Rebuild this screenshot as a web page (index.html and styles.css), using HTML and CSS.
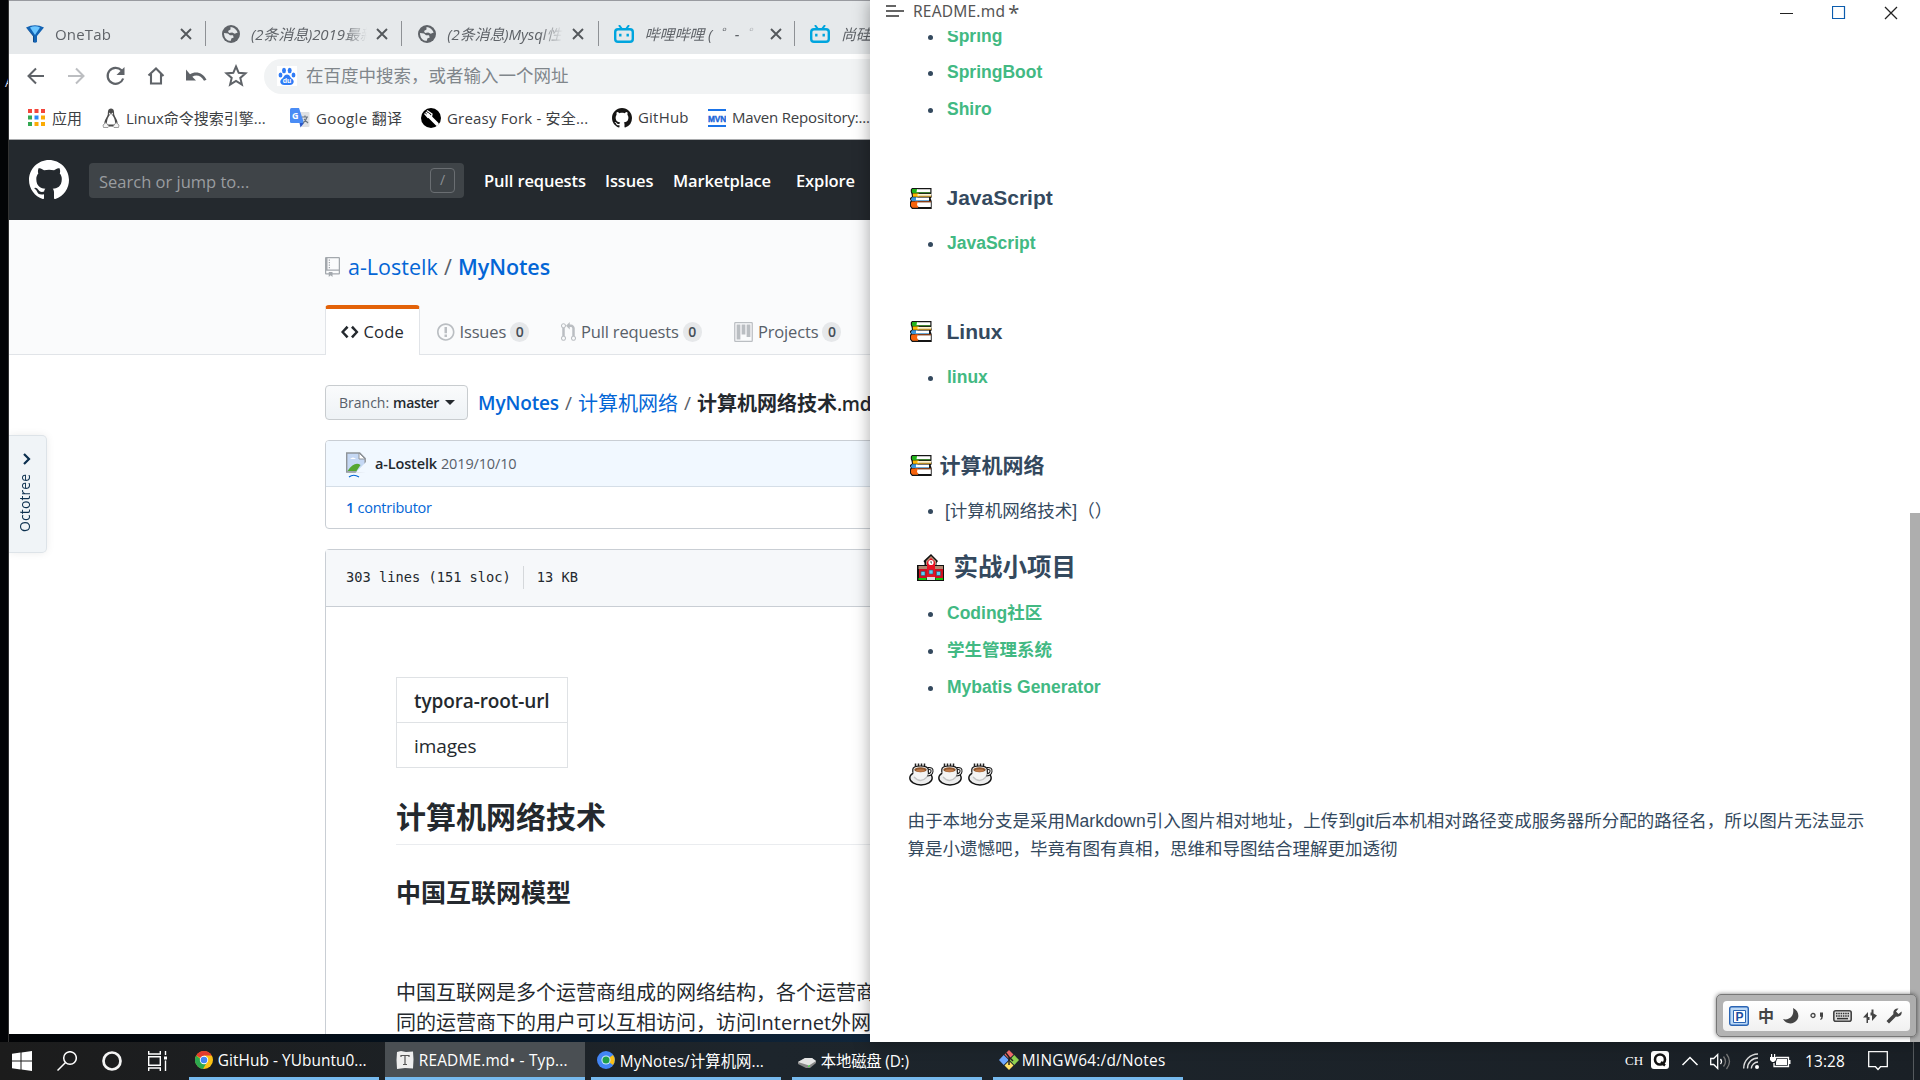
FILE: index.html
```html
<!DOCTYPE html>
<html lang="zh-CN">
<head>
<meta charset="utf-8">
<title>Desktop</title>
<link rel="stylesheet" href="styles.css">
</head>
<body>
<svg class="defs" width="0" height="0">
  <symbol id="x" viewBox="0 0 12 12"><path d="M1 1l10 10M11 1L1 11" fill="none" stroke="#54585c" stroke-width="1.9"/></symbol>
  <symbol id="globe" viewBox="0 0 18 18"><circle cx="9" cy="9" r="9" fill="#5f6368"/><path d="M2 8l4 .6 2 1.600h3l.7 2.200-2.400 1.200-.4 2.200C4.500 16 2 12.500 2 8zM8.500 2c3.500.2 6 2.500 7.200 5.500l-3 1.300-2.500-1.300L7 8 6 6l2.500-1.500z" fill="#e6e9eb"/></symbol>
  <symbol id="bili" viewBox="0 0 20 18"><path d="M5.500.8L8 4M14.500.8L12 4" stroke="#00a5de" stroke-width="2" stroke-linecap="round"/><rect x="1.200" y="4.200" width="17.600" height="12.600" rx="2.800" fill="none" stroke="#00a5de" stroke-width="2.400"/><path d="M6.300 8.700v2.800M13.700 8.700v2.800" stroke="#00a5de" stroke-width="2.400"/></symbol>
  <symbol id="octocat" viewBox="0 0 16 16"><path fill-rule="evenodd" d="M8 0C3.580 0 0 3.580 0 8c0 3.540 2.290 6.530 5.470 7.590.4.070.55-.17.55-.38 0-.19-.01-.82-.01-1.490-2.010.37-2.530-.49-2.690-.94-.09-.23-.48-.94-.82-1.130-.28-.15-.68-.52-.01-.53.63-.01 1.080.58 1.230.82.72 1.210 1.870.87 2.330.66.070-.52.28-.87.51-1.070-1.780-.2-3.640-.89-3.640-3.950 0-.87.31-1.590.82-2.150-.08-.2-.36-1.020.08-2.120 0 0 .67-.21 2.200.82.64-.18 1.320-.27 2-.27s1.360.09 2 .27c1.530-1.040 2.200-.82 2.200-.82.44 1.100.16 1.920.08 2.120.51.56.82 1.270.82 2.150 0 3.070-1.870 3.750-3.650 3.950.29.25.54.73.54 1.480 0 1.070-.01 1.930-.01 2.200 0 .21.15.46.55.38A8.010 8.010 0 0 0 16 8c0-4.420-3.580-8-8-8z"/></symbol>
  <symbol id="books" viewBox="0 0 22 21"><path d="M2 0h19.500v5.500l-.5 1h.7v2.800l-1 1 1 3v7.700H2L0 18.500V14l.8-1.500L0 11.500V10l2-1.500-.5-2.500L.8 4V1.500z" fill="#151515"/><path d="M2.200 1h6v4.200H2.800L1.800 4z" fill="#22b31a"/><path d="M7 1.200h13.300v3H6.500z" fill="#fff"/><path d="M6 4.200h14.300v1H6z" fill="#3d8f2b"/><path d="M2.800 5.500h6v3.300H3z" fill="#ffb900"/><path d="M7.500 6h13.800v1.900H7.500z" fill="#fff3cf"/><path d="M7.500 7.900h13.800v.9H7.500z" fill="#e0a92c"/><path d="M2 9.200h5.500V13H2L.8 11.500z" fill="#3a96dd"/><path d="M6 9.600h13v2.400H6z" fill="#fff"/><path d="M6 12h13v1H6z" fill="#6aa9d8"/><path d="M2 13.500h6v6.200H2.500L1 18v-3.500z" fill="#f7630c"/><path d="M7.500 14.200h13.300v4.800H8.500L7 17z" fill="#fff"/><path d="M5 13.400h16v.8H5z" fill="#d35b1d"/></symbol>
  <symbol id="cup" viewBox="0 0 25 23"><ellipse cx="12" cy="15" rx="11.200" ry="7" fill="#ededed" stroke="#111" stroke-width="1.400"/><path d="M6.500.500v3M9.500.500v3M12.500.500v3M15.500.500v3" stroke="#222" stroke-width="1.500"/><path d="M19 5.500q4.500-.5 4 3t-5.500 3.500" fill="none" stroke="#111" stroke-width="3"/><path d="M19 5.500q4.500-.5 4 3t-5.500 3.500" fill="none" stroke="#eee" stroke-width="1.100"/><path d="M4 6.500c0-2 3-3.200 7.500-3.200S19.300 4.500 19.300 6.500c0 6-3 10.500-7.800 10.500S4 12.500 4 6.500z" fill="#f4f4f4"/><path d="M3.800 9.500V6.500c0-2 3-3.500 7.700-3.500s7.800 1.500 7.800 3.500v3" fill="none" stroke="#111" stroke-width="1.200"/><ellipse cx="11.500" cy="6.700" rx="6.200" ry="2.500" fill="#8e562e"/><ellipse cx="11.500" cy="7.500" rx="4.300" ry="1.300" fill="#c27c4b"/><path d="M5 14q6.500 7 13 0" fill="none" stroke="#c4c4c4" stroke-width="1.300"/></symbol>
</svg>

<div class="workspace">
  <div class="gutter"><span class="peek">A</span></div>

  <section class="browser">
    <div class="tabs">
      <div class="tab"><svg class="fav" viewBox="0 0 18 18"><path d="M0 2.500Q9-2 18 2.500L11 11v6q-2 1.500-4 0v-6z" fill="#1464b4"/><path d="M4 2.500q5-2.500 10 0L9 10z" fill="#6cc6ff"/><path d="M0 2.500L7.500 11v6.300L7 17v-6z" fill="#0a2e5c"/></svg><span class="tab-t up"><i>OneTab</i></span><svg class="cl"><use href="#x"/></svg></div>
      <div class="tab"><svg class="fav"><use href="#globe"/></svg><span class="tab-t"><i>(2条消息)2019最新</i></span><svg class="cl"><use href="#x"/></svg></div>
      <div class="tab"><svg class="fav"><use href="#globe"/></svg><span class="tab-t"><i>(2条消息)Mysql性</i></span><svg class="cl"><use href="#x"/></svg></div>
      <div class="tab"><svg class="fav b"><use href="#bili"/></svg><span class="tab-t"><i>哔哩哔哩 (&nbsp; ゜- &nbsp;゜)つ</i></span><svg class="cl"><use href="#x"/></svg></div>
      <div class="tab"><svg class="fav b"><use href="#bili"/></svg><span class="tab-t"><i>尚硅谷</i></span></div>
    </div>

    <div class="toolbar">
      <svg class="tb" viewBox="0 0 24 24"><path d="M20 12H5M12 4.500L4.500 12l7.500 7.500" fill="none" stroke="#5f6368" stroke-width="2"/></svg>
      <svg class="tb" viewBox="0 0 24 24"><path d="M4 12h15M12 4.500l7.500 7.500-7.500 7.500" fill="none" stroke="#bcbec1" stroke-width="2"/></svg>
      <svg class="tb" viewBox="0 0 24 24"><path d="M19.200 14.500A8 8 0 1 1 17.500 6.300L19 8" fill="none" stroke="#5f6368" stroke-width="2.200"/><path d="M20.500 3v8h-8z" fill="#5f6368"/></svg>
      <svg class="tb" viewBox="0 0 24 24"><path d="M4.500 11.500L12 4.500l7.500 7.500M7 10v9.500h10V10" fill="none" stroke="#5f6368" stroke-width="2.100"/></svg>
      <svg class="tb" viewBox="0 0 24 24"><path d="M2 5.500v11h10L8.300 12.800c4-2.700 9-1 11.700 4l2.500-1C19.500 9 12 6.500 6 10.200z" fill="#5f6368"/></svg>
      <svg class="tb" viewBox="0 0 24 24"><path d="M12 2.500l2.700 6.300 6.800.6-5.200 4.500 1.600 6.700-5.900-3.600-5.900 3.600 1.600-6.700-5.200-4.500 6.800-.6z" fill="none" stroke="#5f6368" stroke-width="2"/></svg>
      <div class="omni">
        <svg class="baidu" viewBox="0 0 20 20"><path fill="#fff" d="M0 0h20v20H0z"/><g fill="#2f7cf6"><ellipse cx="7" cy="4.500" rx="2" ry="2.700"/><ellipse cx="12.700" cy="4.500" rx="2" ry="2.700"/><ellipse cx="3.500" cy="9" rx="1.900" ry="2.500"/><ellipse cx="16.500" cy="9" rx="1.900" ry="2.500"/><path d="M10 8.500c3 0 3 3 5.300 4.500 3 2.500.7 6-2.300 6H7c-3 0-5.300-3.500-2.300-6C7 11.500 7 8.500 10 8.500z"/></g><text x="10" y="17" font-family="Liberation Sans" font-size="7" font-weight="bold" fill="#fff" text-anchor="middle">du</text></svg>
        <span>在百度中搜索，或者输入一个网址</span>
      </div>
    </div>

    <div class="bookmarks">
      <div class="bm bm-apps"><svg viewBox="0 0 18 18"><g fill="#f4453a"><path d="M0 0h4v4H0zM6.500 0h4v4h-4zM13 0h4v4h-4z"/></g><path fill="#34a853" d="M0 6.500h4v4H0zM0 13h4v4H0z"/><path fill="#2b8af7" d="M6.500 6.500h4v4h-4z"/><path fill="#fbab05" d="M13 6.500h4v4h-4zM6.500 13h4v4h-4zM13 13h4v4h-4z"/></svg><i>应用</i></div>
      <div class="bm bm-linux"><svg viewBox="0 0 18 20"><path d="M9 .5c-3.500 0-3 4-3.200 6C5 9.500 2 12 2.500 16l3 2.500h7l3-2.500c.5-4-2.500-6.500-3.300-9.500-.2-2 .3-6-3.200-6z" fill="#4c4c4c"/><path d="M9 6c-2.500 2-4.500 6-4 10.500h8C13.500 12 11.500 8 9 6z" fill="#fff"/><path d="M7 4.500l2 1.500 2-1.500v2H7z" fill="#eee"/><path d="M1 17l3-2.500 3 4-1 1H1.500zM17 17l-3-2.500-3 4 1 1h4.500z" fill="#f5f5f5" stroke="#888" stroke-width=".8"/></svg><i>Linux命令搜索引擎...</i></div>
      <div class="bm bm-gt"><svg class="w20" viewBox="0 0 20 20"><path fill="#dfe1e4" d="M8 4h10.500q1 0 1 1v13q0 1-1 1H12z"/><path fill="#4a8cf5" d="M1.500 0H9l5 15H1.500Q0 15 0 14V1.500Q0 0 1.500 0z"/><path fill="#2a56c6" d="M9.500 15H14l-3.500 4.500z"/><text x="2" y="11" font-size="9" font-weight="bold" font-family="Open Sans" fill="#fff">G</text><path d="M12 9h6M15 7.500V9M17 9q-1 4-4 6M14 11l4 4" stroke="#6b7683" fill="none" stroke-width="1.200"/></svg><i>Google 翻译</i></div>
      <div class="bm bm-gf"><svg class="w20" viewBox="0 0 20 20"><circle cx="10" cy="10" r="10" fill="#000"/><path d="M7 7l9 9" stroke="#fff" stroke-width="3.600" stroke-linecap="round"/><path d="M3.500 5.500l3.500 4 3.500-1L11 6 6 2.500M4.800 4l4 3.500" stroke="#fff" stroke-width="1.300" fill="none"/></svg><i>Greasy Fork - 安全...</i></div>
      <div class="bm bm-gh"><svg class="w20" fill="#161514"><use href="#octocat"/></svg><i>GitHub</i></div>
      <div class="bm bm-mvn"><svg viewBox="0 0 18 18"><path d="M0 1h18M0 17h18" stroke="#1a73e8" stroke-width="2"/><text x="9" y="12.700" font-family="Liberation Sans" font-size="9.500" font-weight="bold" fill="#1a63d8" stroke="#1a63d8" stroke-width=".4" text-anchor="middle" textLength="18" lengthAdjust="spacingAndGlyphs">MVN</text></svg><i>Maven Repository:...</i></div>
    </div>

    <header class="gh-head">
      <svg class="mark" fill="#fff"><use href="#octocat"/></svg>
      <div class="gh-search"><i>Search or jump to...</i><b>/</b></div>
      <nav><a class="n1">Pull requests</a><a class="n2">Issues</a><a class="n3">Marketplace</a><a class="n4">Explore</a></nav>
    </header>

    <div class="repo-head">
      <h1><svg viewBox="0 0 12 16" fill="#a3a8ad"><path d="M4 9H3V8h1v1zm0-3H3v1h1V6zm0-2H3v1h1V4zm0-2H3v1h1V2zm8-1v12c0 .55-.45 1-1 1H6v2l-1.500-1.500L3 16v-2H1c-.55 0-1-.45-1-1V1c0-.55.45-1 1-1h10c.55 0 1 .45 1 1zm-1 10H1v2h2v-1h3v1h5v-2zm0-10H2v9h9V1z"/></svg><i class="own">a-Lostelk</i><em>/</em><i class="rep">MyNotes</i></h1>
      <div class="repo-tabs">
        <div class="rt on"><svg viewBox="0 0 14 16"><path d="M9.500 3L8 4.500 11.500 8 8 11.500 9.500 13 14 8 9.500 3zm-5 0L0 8l4.500 5L6 11.500 2.500 8 6 4.500 4.500 3z"/></svg><i>Code</i></div>
        <div class="rt rt-i"><svg viewBox="0 0 14 16"><path d="M7 2.300c3.140 0 5.700 2.560 5.700 5.700s-2.560 5.700-5.700 5.700A5.710 5.710 0 0 1 1.300 8c0-3.140 2.560-5.700 5.700-5.700zM7 1C3.140 1 0 4.140 0 8s3.140 7 7 7 7-3.140 7-7-3.140-7-7-7zm1 3H6v5h2V4zm0 6H6v2h2v-2z"/></svg><i>Issues</i><b>0</b></div>
        <div class="rt rt-p"><svg class="s12" viewBox="0 0 12 16"><path d="M11 11.280V5c-.03-.78-.34-1.470-.94-2.060C9.460 2.350 8.780 2.030 8 2H7V0L4 3l3 3V4h1c.27.020.48.110.69.310.21.200.3.420.31.690v6.280A1.993 1.993 0 0 0 10 15a1.993 1.993 0 0 0 1-3.720zm-1 2.920c-.66 0-1.200-.55-1.200-1.200 0-.65.55-1.200 1.200-1.200.65 0 1.200.55 1.200 1.200 0 .65-.55 1.200-1.200 1.200zM4 3c0-1.110-.89-2-2-2a1.993 1.993 0 0 0-1 3.720v6.560A1.993 1.993 0 0 0 2 15a1.993 1.993 0 0 0 1-3.720V4.720c.59-.34 1-.98 1-1.720zm-.8 10c0 .66-.55 1.200-1.200 1.200-.65 0-1.200-.55-1.200-1.200 0-.65.55-1.200 1.200-1.200.65 0 1.200.55 1.200 1.200zM2 4.200C1.340 4.200.8 3.650.8 3c0-.65.55-1.200 1.200-1.200.65 0 1.200.55 1.200 1.200 0 .65-.55 1.200-1.200 1.200z"/></svg><i>Pull requests</i><b>0</b></div>
        <div class="rt rt-j"><svg class="s15" viewBox="0 0 15 16"><path fill-rule="evenodd" d="M10 12h3V2h-3v10zm-4-2h3V2H6v8zm-4 4h3V2H2v12zm-1 1h13V1H1v14zM14 0H1a1 1 0 0 0-1 1v14a1 1 0 0 0 1 1h13a1 1 0 0 0 1-1V1a1 1 0 0 0-1-1z"/></svg><i>Projects</i><b>0</b></div>
      </div>
    </div>

    <div class="octotree"><svg viewBox="0 0 8 12"><path d="M1 1l5 5-5 5" fill="none" stroke="#0b2f4e" stroke-width="2.200"/></svg><span>Octotree</span></div>

    <main class="repo">
      <div class="crumbs">
        <div class="branch"><i class="br">Branch:</i><i class="ma">master</i><u></u></div>
        <i class="c1">MyNotes</i><em>/</em><i class="c2">计算机网络</i><em>/</em><i class="c3">计算机网络技术<span>.md</span></i>
      </div>
      <div class="commit">
        <div class="commit-top"><svg viewBox="0 0 20 26"><path d="M.7 1h13l5.500 5.500V20H.7z" fill="#c5d8f4" stroke="#8f9499" stroke-width="1.400"/><path d="M13 1v6h6z" fill="#fff" stroke="#8f9499"/><path d="M1.500 19q7-10 13-6l-4 6z" fill="#55a630"/><path d="M9.500 20.800L20 10v11z" fill="#f1f8ff"/><path d="M4 7q3-3 6 0z" fill="#fff"/><path d="M3 25q4.500-3.500 10 0" fill="none" stroke="#0366d6" stroke-width="1.200"/></svg><i class="auth">a-Lostelk</i><i class="date">2019/10/10</i></div>
        <div class="commit-bot"><i><b>1</b> contributor</i></div>
      </div>
      <div class="file">
        <div class="file-top"><span>303 lines (151 sloc)</span><span class="kb">13 KB</span></div>
        <div class="md">
          <div class="tbl"><div class="th">typora-root-url</div><div>images</div></div>
          <h2>计算机网络技术</h2>
          <h3>中国互联网模型</h3>
          <p>中国互联网是多个运营商组成的网络结构，各个运营商<br>同的运营商下的用户可以互相访问，访问Internet外网，</p>
        </div>
      </div>
    </main>
  </section>

  <section class="typora">
    <div class="t-bar">
      <svg class="burger" viewBox="0 0 18 12"><path d="M0 1h10M0 6h18M0 11h13" stroke="#333" stroke-width="1.300"/></svg>
      <i>README.md</i><em>*</em>
      <div class="ctl"><svg viewBox="0 0 14 14"><path d="M0 7.500h13" stroke="#222"/></svg><svg viewBox="0 0 14 14"><path d="M.5.500h12v12H.500z" fill="none" stroke="#0b5cad" stroke-width="1.200"/></svg><svg viewBox="0 0 14 14"><path d="M1 1l12 12M13 1L1 13" stroke="#222" stroke-width="1.300"/></svg></div>
    </div>
    <div class="t-main">
      <article>
        <ul class="first"><li><a>Spring</a></li><li><a>SpringBoot</a></li><li><a>Shiro</a></li></ul>
        <h3><svg><use href="#books"/></svg><span class="lat">JavaScript</span></h3>
        <ul><li><a>JavaScript</a></li></ul>
        <h3><svg><use href="#books"/></svg><span class="lat">Linux</span></h3>
        <ul><li><a>linux</a></li></ul>
        <h3><svg><use href="#books"/></svg><span>计算机网络</span></h3>
        <ul><li class="plain">[计算机网络技术]（）</li></ul>
        <h2><svg viewBox="0 0 28 28"><path d="M14 0l7 7-1.500 2V11H27v16H0V11h7.500V9L6.500 7z" fill="#111"/><path d="M14 2l5 5v4H9V7z" fill="#b98a72"/><path d="M10 8l4-4 4 4v17h-8z" fill="#e81224"/><path d="M1.500 12H10v3H1.500zM18 12h8v3h-8z" fill="#b08972"/><path d="M2 15h8v9H2zM18 15h8v9h-8z" fill="#d01020"/><circle cx="14" cy="8.500" r="2.600" fill="#fff"/><path d="M14 7v2h1" stroke="#333" fill="none" stroke-width=".8"/><path d="M4 17.500h4v4H4zM19.500 17.500h4v4h-4zM12 16h4v4h-4z" fill="#5ad1f5" stroke="#35566a" stroke-width=".6"/><path d="M1.500 24h8v2h-8zM18.500 24h7.500v2h-7.500z" fill="#16c60c"/><path d="M10 23h8v3h-8z" fill="#ddd"/></svg><span>实战小项目</span></h2>
        <ul><li><a>Coding社区</a></li><li><a>学生管理系统</a></li><li><a>Mybatis Generator</a></li></ul>
        <div class="cups"><svg><use href="#cup"/></svg><svg><use href="#cup"/></svg><svg><use href="#cup"/></svg></div>
        <p>由于本地分支是采用Markdown引入图片相对地址，上传到git后本机相对路径变成服务器所分配的路径名，所以图片无法显示<br>算是小遗憾吧，毕竟有图有真相，思维和导图结合理解更加透彻</p>
      </article>
      <div class="scroll"></div>
    </div>
  </section>
</div>

<footer class="taskbar">
  <svg class="sys" viewBox="0 0 20 20"><path fill="#fff" d="M0 2.800l8.500-1.200v8H0zM9.500 1.400L20 0v9.600H9.500zM0 10.500h8.500v8L0 17.300zM9.500 10.500H20V20L9.500 18.600z"/></svg>
  <svg class="sys" viewBox="0 0 20 20"><circle cx="13" cy="7" r="6.300" fill="none" stroke="#fff" stroke-width="1.500"/><path d="M8.500 11.500L.5 19.500" stroke="#fff" stroke-width="1.500"/></svg>
  <svg class="sys" viewBox="0 0 20 20"><circle cx="10" cy="10" r="8.500" fill="none" stroke="#f4f4f4" stroke-width="2.700"/></svg>
  <svg class="sys" viewBox="0 0 20 20"><path d="M.7 0v3h11.600V0M.7 20v-3h11.600v3M.7 5.800h11.600v8.400H.7zM17.500 0v4M17.500 9.500V20" fill="none" stroke="#fff" stroke-width="1.400"/><path d="M16 5.500h3v3h-3z" fill="#fff"/></svg>
  <div class="app"><svg viewBox="0 0 18 18"><circle cx="9" cy="9" r="9" fill="#fbc116"/><path d="M9 9L1.200 4.500A9 9 0 0 1 16.800 4.500H9z" fill="#e33b2e"/><path d="M1.200 4.500A9 9 0 0 0 8 18l4-7H9z" fill="#2da94f"/><circle cx="9" cy="9" r="4.200" fill="#fff"/><circle cx="9" cy="9" r="3.300" fill="#4285f4"/></svg><i>GitHub - YUbuntu0...</i></div>
  <div class="app active"><svg viewBox="0 0 18 18"><path d="M1 1l4-1 5 1 7-.5.500 8-.5 9L9 17l-8 1L.5 9z" fill="#eee"/><path d="M5 6V4.500h8V6M9 4.500v9M7 13.500h4" stroke="#555" stroke-width="1.200" fill="none"/></svg><i>README.md• - Typ...</i></div>
  <div class="app"><svg viewBox="0 0 18 18"><circle cx="9" cy="9" r="9" fill="#4285f4"/><path d="M9 9l7-5a9 9 0 0 1 0 10z" fill="#fbc116"/><circle cx="9" cy="9" r="4.600" fill="#c8e6ff"/><circle cx="9" cy="9" r="3.500" fill="#1fa04b"/></svg><i>MyNotes/计算机网...</i></div>
  <div class="app disk"><svg viewBox="0 0 18 18"><path d="M0 11l7-4h7l4 3v2l-6 5H8l-8-4z" fill="#888"/><path d="M0 11l7-4h7l4 3-7 4.500z" fill="#e4e4e4"/><path d="M10 15.500l2-.8" stroke="#3f3" stroke-width="1"/></svg><i>本地磁盘 (D:)</i></div>
  <div class="app"><svg class="git" viewBox="0 0 20 20"><path d="M10 0l4.500 4.500L10 9 5.500 4.500z" fill="#f26d6d"/><path d="M4.700 5L9.700 10l-5 5L0 10z" fill="#6fa8ff"/><path d="M15.300 5L20 10l-4.700 5-4.800-5z" fill="#8fd14f"/><path d="M10 11l4.500 4.500L10 20l-4.500-4.500z" fill="#ffe066"/><path d="M7 3l3 4v8M10 7l4 4" stroke="#222" stroke-width="1.500" fill="none"/></svg><i>MINGW64:/d/Notes</i></div>
  <div class="tray">
    <span class="ch">CH</span>
    <svg class="q" viewBox="0 0 18 18"><rect width="18" height="18" rx="3" fill="#fff"/><circle cx="9" cy="8.500" r="5" fill="none" stroke="#111" stroke-width="2.600"/><path d="M10 11l4 3.500" stroke="#111" stroke-width="2.400"/></svg>
    <svg class="up-ic" viewBox="0 0 18 10"><path d="M1.500 9L9 1.500 16.500 9" fill="none" stroke="#fff" stroke-width="1.500"/></svg>
    <svg class="spk" viewBox="0 0 21 17"><path d="M.7 5.500h3l4-4v14l-4-4h-3z" fill="none" stroke="#fff" stroke-width="1.300"/><path d="M10.500 6q2 2.500 0 5" fill="none" stroke="#fff" stroke-width="1.300"/><path d="M13.500 3.500q4 5 0 10M16.500 1q6 7.500 0 15" fill="none" stroke="#777" stroke-width="1.300"/></svg>
    <svg class="wifi" viewBox="0 0 17 16"><path d="M.7 15.500A14.500 14.500 0 0 1 15 1M4.500 15.500A10.500 10.500 0 0 1 15 5M8.300 15.500A7 7 0 0 1 15 9" fill="none" stroke="#ddd" stroke-width="1.400"/><circle cx="14" cy="14" r="2" fill="#fff"/></svg>
    <svg class="bat" viewBox="0 0 21 14"><path d="M6 3.500h12.500v9H4V9" fill="none" stroke="#fff" stroke-width="1.300"/><path d="M7 5h10v6H6V8z" fill="#fff"/><path d="M19 6h1.500v4H19zM0 3h6v3L4 8H2L0 6zM1 0h1.200v3H1zM4 0h1.200v3H4z" fill="#fff"/></svg>
    <span class="time">13:28</span>
    <svg class="note" viewBox="0 0 20 20"><path d="M.7.700h18.600v15H12.500L10 18.500 7.500 15.700H.7z" fill="none" stroke="#fff" stroke-width="1.300"/></svg>
    <span class="peek-desk"></span>
  </div>
</footer>

<div class="ime"><div>
  <svg class="p" viewBox="0 0 20 20"><rect x=".7" y=".7" width="18.600" height="18.600" rx="2" fill="#bcd9f7" stroke="#2a64b4" stroke-width="1.400"/><path d="M4.500 4.500h12v12h-12z" fill="#fff" stroke="#2a64b4"/><text x="10.500" y="15" font-family="Liberation Sans" font-weight="bold" font-size="12" fill="#1c4ea0" text-anchor="middle">P</text></svg>
  <span>中</span>
  <svg class="moon" viewBox="0 0 16 16"><path d="M10 0c7 3 7 12 1 14.500C7 16.500 2 15 0 11c4 1.500 12-1 10-11z" fill="#444"/></svg>
  <svg class="pt" viewBox="0 0 14 10"><circle cx="3" cy="4.500" r="2" fill="none" stroke="#444" stroke-width="1.300"/><path d="M10 1.500h3v3.500q0 3-2.500 4l-.3-1q1.300-1 1-2.300H10z" fill="#444"/></svg>
  <svg class="kb-ic" viewBox="0 0 19 12"><rect x=".8" y=".8" width="17.400" height="10.400" rx="2" fill="#ddd" stroke="#444" stroke-width="1.600"/><path d="M3 3.500h13M3 6h13" stroke="#333" stroke-width="1.400" stroke-dasharray="1.500 .8"/><path d="M4 8.600h11" stroke="#333" stroke-width="1.500"/></svg>
  <svg class="sw" viewBox="0 0 14 16"><path d="M0 9.500L5 4v5h1.500v3H5v3H3.500v-5.500zM14 7.500L9 13V7.500H7.500v-3H8.500V1.500h2v4z" fill="#444"/></svg>
  <svg class="wr" viewBox="0 0 16 16"><path d="M15.500 3.500L12.500 6 10 3.500 12.500.5C9 0 6.500 3 7.500 6L.5 13 3 15.500l7-7c3.500 1 6.500-1.500 5.500-5z" fill="#444"/></svg>
</div></div>
</body>
</html>
```
FILE: styles.css
```css
* { box-sizing: border-box; }
body { margin: 0; width: 1920px; height: 1080px; overflow: hidden; background: #04060a; font-family: "Open Sans", "Noto Sans CJK SC", sans-serif; display: flex; flex-direction: column; position: relative; }
i, em, u { font-style: normal; text-decoration: none; white-space: nowrap; }
h1, h2, h3, p, ul { margin: 0; padding: 0; }
svg { flex: none; display: block; }
.defs { position: absolute; }
.workspace { height: 1042px; display: flex; background: linear-gradient(90deg, #020305 0, #04101c 400px, #10263c 870px); }
.gutter { width: 9px; background: #030406; border-right: 1px solid #333; overflow: hidden; padding: 70px 0 0 5px; }
.peek { color: #dde; font-size: 13px; }

/* browser window */
.browser { width: 861px; height: 1034px; background: #fff; overflow: hidden; position: relative; }
.tabs { height: 54px; background: #e6e9eb; border-top: 1px solid #999ba0; display: flex; padding-top: 20px; }
.tab { width: 196.300px; height: 25px; flex: none; display: flex; align-items: center; padding-left: 16px; border-right: 1px solid #8e9195; color: #5f6368; font-size: 15px; }
.tab:first-child { width: 197px; padding-left: 17px; }
.tab:last-child { border: 0; }
.fav { width: 18px; height: 18px; margin-right: 11px; }
.fav.b { width: 20px; margin: 0 11px 0 -1px; }
.tab-t { width: 116px; margin-right: 9px; overflow: hidden; white-space: nowrap; -webkit-mask-image: linear-gradient(90deg, #000 80%, transparent); mask-image: linear-gradient(90deg, #000 80%, transparent); }
.tab-t i { font-style: italic; letter-spacing: -.1px; }
.tab-t.up i { font-style: normal; letter-spacing: .15px; }
.cl { width: 12px; height: 12px; }
.toolbar { height: 44px; display: flex; align-items: center; padding-left: 15px; }
.tb { width: 24px; height: 24px; margin-right: 16px; }
.omni { flex: 1; height: 35px; border-radius: 18px 0 0 18px; background: #f1f3f4; display: flex; align-items: center; gap: 9px; padding-left: 13px; font-size: 17.500px; line-height: 33px; color: #80868b; white-space: nowrap; }
.omni span { padding-bottom: 2px; }
.baidu { width: 20px; height: 20px; }
.bookmarks { height: 42px; border-bottom: 1px solid #a9abad; display: flex; padding-left: 19px; font-size: 15px; color: #3c4043; }
.bm { flex: none; display: flex; align-items: center; gap: 6px; height: 39px; }
.bm i { padding-bottom: 1px; }
.bm svg { width: 18px; height: 20px; }
.bm svg.w20 { width: 20px; }
.bm-apps { width: 74px; }
.bm-linux { width: 188px; }
.bm-gt { width: 131px; letter-spacing: .35px; }
.bm-gf { width: 191px; letter-spacing: .2px; }
.bm-gh { width: 96px; letter-spacing: .2px; }
.bm-mvn { letter-spacing: -.18px; }

.gh-head { height: 80px; background: #24292e; display: flex; align-items: center; padding-left: 20px; }
.mark { width: 40px; height: 40px; }
.gh-search { width: 375px; height: 35px; margin: 1px 20px 0 20px; background: #3f4448; border-radius: 4px; display: flex; align-items: center; justify-content: space-between; padding: 0 9px 0 10px; color: #9a9da0; font-size: 16.500px; }
.gh-search i { padding-top: 1px; }
.gh-search b { width: 25px; height: 25px; border: 1px solid #6a6e72; border-radius: 4px; font: 14px/22px "Open Sans", sans-serif; text-align: center; color: #8b8f93; }
nav { display: flex; color: #fff; font-weight: 600; font-size: 16.500px; letter-spacing: -.14px; white-space: nowrap; }
.n1 { width: 121px; }
.n2 { width: 68px; }
.n3 { width: 123px; }
.repo-head { height: 135px; background: #fafbfc; border-bottom: 1px solid #e1e4e8; padding: 31px 0 0 316px; }
.repo-head h1 { height: 32px; display: flex; align-items: center; font-size: 21.500px; font-weight: 400; line-height: 32px; }
.repo-head h1 svg { width: 15px; height: 20px; margin-right: 8px; }
.repo-head h1 em { width: 20px; text-align: center; color: #586069; }
.own, .rep { color: #0366d6; }
.own { width: 90px; }
.rep { font-weight: 600; letter-spacing: -.09px; }
.repo-tabs { display: flex; margin-top: 22px; height: 50px; }
.rt { display: flex; align-items: center; height: 50px; font-size: 16.500px; color: #586069; padding-top: 3px; letter-spacing: -.16px; }
.rt i { padding-bottom: 1px; }
.rt svg { width: 17.500px; height: 20px; fill: #babec2; margin-right: 5px; }
.rt svg.s12 { width: 15px; }
.rt svg.s15 { width: 19px; margin-left: 1px; }
.rt b { width: 19px; height: 20px; border-radius: 10px; background: #e6e8ea; font: 600 14px/20px "Open Sans", sans-serif; text-align: center; color: #444d56; margin-left: 4px; }
.rt.on { width: 95px; background: #fff; border: 1px solid #e1e4e8; border-top: 4px solid #e36209; border-bottom: 0; border-radius: 4px 4px 0 0; padding: 0 0 0 15px; color: #24292e; letter-spacing: .2px; }
.rt.on svg { fill: #24292e; }
.rt-i { width: 124px; margin-left: 17px; }
.rt-p { width: 172px; }

.octotree { position: absolute; left: 0; top: 435px; width: 38px; height: 118px; background: #f0f4f7; border: 1px solid #dde3e8; border-left: 0; border-radius: 0 5px 5px 0; box-shadow: 0 0 8px rgba(0,0,0,.08); color: #0b2f4e; }
.octotree svg { width: 8px; height: 12px; margin: 17px 0 0 14px; }
.octotree span { display: block; writing-mode: vertical-rl; transform: rotate(180deg); font-size: 14px; line-height: 20px; margin: 7px 0 0 6px; height: 60px; letter-spacing: .1px; }

.repo { padding: 30px 0 0 316px; width: 900px; }
.crumbs { height: 35px; display: flex; align-items: center; font-size: 19px; color: #586069; }
.branch { width: 143px; height: 35px; border: 1px solid #c8cccf; border-radius: 4px; background: linear-gradient(#fafbfc, #eff3f6 90%); display: flex; align-items: center; padding-left: 13px; font-size: 14px; margin-right: 10px; }
.ma { font-weight: 600; color: #24292e; margin-left: 4px; letter-spacing: -.33px; }
.branch u { border: 5px solid transparent; border-top-color: #24292e; border-bottom: 0; margin-left: 6px; }
.c1 { font-weight: 600; color: #0366d6; letter-spacing: -.13px; }
.crumbs em { width: 19px; text-align: center; }
.c2 { color: #0366d6; font-size: 20px; }
.c3 { color: #24292e; font-weight: 700; font-size: 20px; }
.c3 span { font-weight: 600; font-size: 19px; letter-spacing: -.3px; }
.commit { margin-top: 20px; height: 89px; border: 1px solid #c9ced4; border-radius: 4px; overflow: hidden; font-size: 14.500px; letter-spacing: -.15px; }
.commit-top { height: 46px; background: #f1f8ff; border-bottom: 1px solid #d5dee7; display: flex; align-items: center; padding-left: 20px; }
.commit-top svg { width: 20px; height: 26px; margin: 2px 9px 0 0; }
.auth { font-weight: 600; color: #24292e; margin-right: 4px; }
.date { color: #586069; }
.commit-bot { padding-left: 20px; line-height: 42px; color: #0366d6; letter-spacing: -.25px; }
.commit-bot b { font-weight: 600; }
.file { margin-top: 20px; border: 1px solid #c9ced4; border-radius: 4px; height: 600px; }
.file-top { height: 57px; background: #f6f8fa; border-bottom: 1px solid #c9ced4; display: flex; align-items: center; padding: 0 0 2px 20px; font: 13.700px "DejaVu Sans Mono", monospace; color: #24292e; }
.kb { margin-left: 12px; padding-left: 13px; border-left: 1px solid #d5d8db; line-height: 23px; }
.md { padding: 70px 0 0 70px; color: #24292e; }
.tbl { width: 172px; border: 1px solid #dfe2e5; height: 91px; font-size: 19px; letter-spacing: -.1px; }
.tbl div { height: 44px; padding-left: 17px; line-height: 46px; }
.tbl .th { height: 45px; border-bottom: 1px solid #dfe2e5; font-weight: 600; }
.md h2 { font-size: 30px; line-height: 38px; margin-top: 30px; border-bottom: 1px solid #eaecef; height: 47px; }
.md h3 { font-size: 25px; line-height: 32px; margin-top: 31px; }
.md p { font-size: 20px; line-height: 30px; margin-top: 70px; white-space: nowrap; }

/* markdown editor window */
.typora { width: 1050px; height: 1042px; background: #fff; position: relative; box-shadow: 0 0 16px rgba(0,0,0,.35); }
.t-bar { height: 31px; display: flex; align-items: flex-start; padding-left: 16px; font: 15.500px/23px "Noto Sans", sans-serif; color: #555; }
.t-bar i { letter-spacing: .2px; }
.burger { width: 18px; height: 12px; margin: 5px 9px 0 0; }
.t-bar em { margin-left: 3px; font-size: 20px; line-height: 26px; width: 20px; }
.ctl { margin-left: auto; display: flex; gap: 38px; padding: 6px 22.500px 0 0; }
.ctl svg { width: 14px; height: 14px; }
.t-main { height: 1011px; overflow: hidden; display: flex; justify-content: space-between; }
article { padding-left: 37.500px; width: 1020px; font-family: "Liberation Sans", "Noto Sans CJK SC", sans-serif; color: #34495e; font-size: 17.500px; }
ul { list-style: none; margin-top: 7px; }
ul.first { margin-top: -13.400px; }
li { height: 36.800px; line-height: 36.800px; display: flex; align-items: center; padding-left: 20.500px; white-space: nowrap; }
li::before { content: ""; width: 5px; height: 5px; border-radius: 50%; background: #34495e; margin: 2px 14px 0 0; }
li a { color: #42b983; font-weight: 700; }
li.plain::before { margin-right: 12px; }
article h3, article h2 { display: flex; align-items: center; height: 40px; line-height: 40px; margin-top: 50px; font-size: 21px; }
article h3 svg { width: 22px; height: 21px; margin: 0 8px 0 2px; }
article h3 .lat { margin-left: 7px; }
article h2 { font-size: 24.500px; height: 46px; line-height: 46px; margin-top: 16px; }
article h2 svg { width: 28px; height: 28px; margin: 0 9px 0 9px; }
article h2 + ul { margin-top: 4px; }
.cups { display: flex; gap: 4.500px; margin: 55.600px 0 0 1px; height: 26px; align-items: center; }
.cups svg { width: 25px; height: 23px; }
article p { margin-top: 19.600px; line-height: 28px; white-space: nowrap; }
.scroll { width: 10px; height: 529px; margin-top: 482px; background: #aeaeae; }

/* taskbar */
.taskbar { height: 38px; background: linear-gradient(90deg, #1c1c1c, #1d252c 40%, #1a2026); display: flex; align-items: center; padding-left: 12px; color: #fff; font-size: 15.400px; }
.sys { width: 20px; height: 20px; margin-right: 25.200px; }
.app { width: 190px; height: 38px; flex: none; display: flex; align-items: center; padding: 1px 0 0 6px; border-bottom: 3px solid #76b9ed; margin-right: 11px; letter-spacing: .06px; }
.sys + .app { margin-right: 6px; margin-left: -4px; }
.app svg { width: 18px; height: 20px; margin-right: 5px; }
.app svg.git { width: 20px; margin: 0 3px 0 0; }
.app.active { width: 200px; background: #4a4f53; padding-left: 11px; margin-right: 6px; letter-spacing: .18px; }
.app.disk { letter-spacing: -.2px; }
.app:nth-last-child(2) { letter-spacing: .25px; }
.tray { margin-left: auto; width: 295px; display: flex; align-items: center; height: 38px; }
.ch { font: 13px/22px "Liberation Serif", serif; width: 26px; height: 22px; }
.q { width: 18px; height: 18px; margin: 0 12px 2px 0; }
.up-ic { width: 18px; height: 10px; margin-right: 11px; }
.spk { width: 21px; height: 17px; margin-right: 12px; }
.wifi { width: 17px; height: 16px; margin-right: 10px; }
.bat { width: 21px; height: 14px; margin-right: 14px; }
.time { width: 63px; letter-spacing: .15px; }
.note { width: 20px; height: 20px; }
.peek-desk { width: 1px; height: 38px; background: #555a5e; margin-left: 25px; }
.ime { position: absolute; left: 1716px; top: 994px; width: 201px; height: 43px; border-radius: 5px; background: rgba(172,172,172,.92); border: 1px solid #777; box-shadow: 0 0 4px rgba(0,0,0,.5); padding: 6px; }
.ime > div { height: 30px; border-radius: 4px; background: linear-gradient(#fff, #f0f0f0); display: flex; align-items: center; padding-left: 6px; gap: 9px; }
.ime span { font-size: 16px; font-weight: 700; color: #444; line-height: 28px; }
.p { width: 20px; height: 20px; }
.moon { width: 16px; height: 16px; }
.pt { width: 14px; height: 10px; margin-left: 2px; }
.kb-ic { width: 19px; height: 12px; }
.sw { width: 14px; height: 16px; margin-left: 2px; }
.wr { width: 16px; height: 16px; }
```
